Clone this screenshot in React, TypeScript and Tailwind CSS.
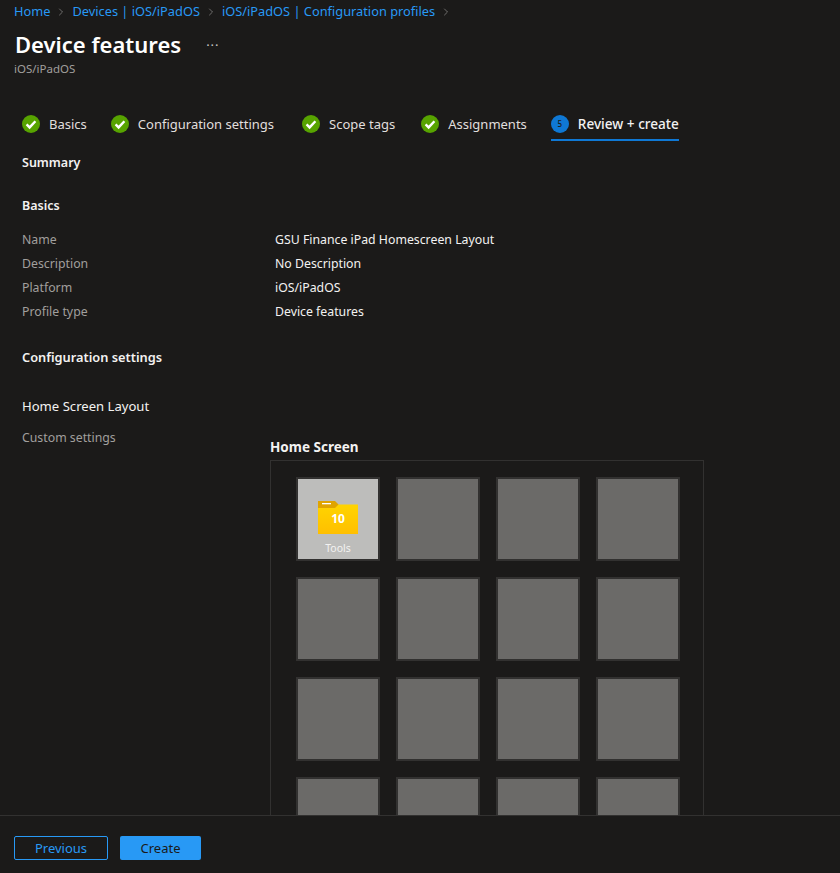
import React from 'react';
import { ChevronRight } from 'lucide-react';

const steps = [
  { label: 'Basics', margin: 'mr-[24px]' },
  { label: 'Configuration settings', margin: 'mr-[28px]' },
  { label: 'Scope tags', margin: 'mr-[26px]' },
  { label: 'Assignments', margin: 'mr-[24px]' },
];

const summaryRows = [
  ['Name', 'GSU Finance iPad Homescreen Layout'],
  ['Description', 'No Description'],
  ['Platform', 'iOS/iPadOS'],
  ['Profile type', 'Device features'],
];

const crumbs = ['Home', 'Devices | iOS/iPadOS', 'iOS/iPadOS | Configuration profiles'];

const CheckBadge = () => (
  <svg width="18" height="18" viewBox="0 0 18 18" className="shrink-0">
    <circle cx="9" cy="9" r="9" fill="#57a300" />
    <path d="M4.6 9.4 L7.6 12.4 L13.4 6.2" fill="none" stroke="#ffffff" strokeWidth="2.4" />
  </svg>
);

const FolderIcon = () => (
  <svg width="40" height="33" viewBox="0 0 40 33" className="block">
    <defs>
      <linearGradient id="folderFill" x1="0" y1="0" x2="0" y2="1">
        <stop offset="0" stopColor="#ffd400" />
        <stop offset="1" stopColor="#ffbf00" />
      </linearGradient>
    </defs>
    <rect x="0" y="3.5" width="40" height="29.5" fill="url(#folderFill)" />
    <path d="M0 0 H17 L20.5 3.5 L17 7 H0 Z" fill="#e0a400" />
    <rect x="4" y="2" width="9" height="1.3" fill="#ffffff" />
  </svg>
);

export default function App() {
  return (
    <div className="flex h-[873px] w-[840px] flex-col overflow-hidden bg-[#1b1a19] font-['Noto_Sans',sans-serif] text-[12.3px] text-[#f3f2f1]">
      <main className="min-h-0 flex-1 overflow-hidden">
        <nav className="flex h-[24px] items-center pl-[14px] text-[12.8px] text-[#2899f5]">
          {crumbs.map((crumb) => (
            <React.Fragment key={crumb}>
              <span className="whitespace-nowrap">{crumb}</span>
              <ChevronRight className="mx-[5px] h-[12px] w-[12px] text-[#a19f9d]" strokeWidth={1.25} />
            </React.Fragment>
          ))}
        </nav>

        <header className="mt-[5px]">
          <div className="flex h-[30px] items-center pl-[15px]">
            <h1 className="text-[22px] leading-[30px] font-semibold text-white">Device features</h1>
            <span className="mt-[3px] ml-[25px] text-[13px] leading-none tracking-[1px] text-[#c8c6c4]">···</span>
          </div>
          <p className="mt-[2px] pl-[14px] text-[11.5px] leading-[15px] text-[#a19f9d]">iOS/iPadOS</p>
        </header>

        <div className="mt-[26px] flex h-[42px] items-start pl-[22px] text-[13px]">
          {steps.map((step) => (
            <div key={step.label} className={`${step.margin} flex h-[39px] items-center gap-[9px] whitespace-nowrap border-b-2 border-transparent pt-[7px] text-[#e1dfdd]`}>
              <CheckBadge />
              <span className="pt-px">{step.label}</span>
            </div>
          ))}
          <div className="flex h-[39px] items-center gap-[9px] whitespace-nowrap border-b-2 border-[#0f78d4] pt-[7px] text-[13.6px] font-medium text-[#f3f2f1]">
            <span className="flex h-[18px] w-[18px] shrink-0 items-center justify-center rounded-full bg-[#0f78d4] text-[8px] text-[#1b1a19]">5</span>
            <span className="pt-px">Review + create</span>
          </div>
        </div>

        <section className="pl-[22px]">
          <h2 className="mt-[10px] text-[12.5px] leading-[18px] font-semibold">Summary</h2>
          <h2 className="mt-[25px] text-[12.5px] leading-[18px] font-semibold">Basics</h2>

          <dl className="mt-[13px]">
            {summaryRows.map(([label, value]) => (
              <div key={label} className="flex h-[24px] items-center">
                <dt className="w-[253px] shrink-0 text-[#a19f9d]">{label}</dt>
                <dd>{value}</dd>
              </div>
            ))}
          </dl>

          <h2 className="mt-[24px] text-[12.8px] leading-[18px] font-semibold">Configuration settings</h2>
          <p className="mt-[31px] text-[13.1px] leading-[18px]">Home Screen Layout</p>

          <div className="mt-[14px] flex items-start">
            <span className="w-[248px] shrink-0 text-[#a19f9d]">Custom settings</span>
            <div className="w-[434px] pt-[9px]">
              <h3 className="text-[13.5px] leading-[18px] font-bold">Home Screen</h3>
              <div className="mt-[4px] border border-[#323130] pt-[16px] pb-[16px] pl-[25px]">
                <div className="grid w-[384px] grid-cols-4 gap-[16px]">
                  {Array.from({ length: 16 }, (_, i) => (
                    <div
                      key={i}
                      className={`flex h-[84px] w-[84px] flex-col items-center border-2 border-[#323130] ${i === 0 ? 'bg-[#bdbdbb]' : 'bg-[#6b6a68]'}`}
                    >
                      {i === 0 && (
                        <>
                          <div className="relative mt-[22px]">
                            <FolderIcon />
                            <span className="absolute inset-x-0 top-[9px] text-center text-[12px] leading-[18px] font-bold text-white">10</span>
                          </div>
                          <span className="mt-[7px] text-[10.5px] leading-[14px] text-[#f3f2f1]">Tools</span>
                        </>
                      )}
                    </div>
                  ))}
                </div>
              </div>
            </div>
          </div>
        </section>
      </main>

      <footer className="flex h-[58px] shrink-0 items-start gap-[12px] border-t border-[#323130] bg-[#1b1a19] pt-[20px] pl-[14px]">
        <button className="h-[24px] w-[94px] rounded-[2px] border border-[#2899f5] pt-px text-[13px] text-[#2899f5]">Previous</button>
        <button className="h-[24px] w-[81px] rounded-[2px] bg-[#2899f5] pt-px text-[13px] text-[#1b1a19]">Create</button>
      </footer>
    </div>
  );
}
